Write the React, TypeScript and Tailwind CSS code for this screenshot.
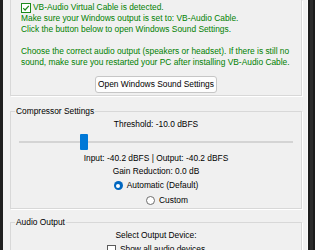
import React from "react";

const font = { fontFamily: '"Liberation Sans", Arial, sans-serif' };

function GreenCheck() {
  return (
    <svg width="10" height="10" viewBox="0 0 10 10" className="shrink-0">
      <rect x="0.5" y="0.5" width="9" height="9" fill="#fff" stroke="#1a8a1a" />
      <path d="M2.2 5.1 L4.1 7 L7.8 2.8" fill="none" stroke="#1a8a1a" strokeWidth="1.2" />
    </svg>
  );
}

function Radio({ checked, label }: { checked?: boolean; label: string }) {
  return (
    <div className="flex h-[15px] items-center justify-center gap-[4px]">
      {checked ? (
        <span className="flex h-[9px] w-[9px] items-center justify-center rounded-full bg-[#0067c0]">
          <span className="h-[4px] w-[4px] rounded-full bg-white" />
        </span>
      ) : (
        <span className="h-[9px] w-[9px] rounded-full border border-[#6e6e6e] bg-white" />
      )}
      <span>{label}</span>
    </div>
  );
}

export default function App() {
  return (
    <div className="flex h-[250px] w-[315px] overflow-hidden bg-[#f0f0f0] text-[8.4px] text-black" style={font}>
      <div className="w-[3px] shrink-0 bg-[#1e1e1e]" />
      <div className="flex min-w-0 flex-1 flex-col pl-[7px] pr-[5px]">
        {/* VB-Audio group (top edge scrolled away) */}
        <div className="border-x border-b border-[#d8d8d8] px-[10px] pb-[2px] pt-[2px] leading-[11px] text-[#008000] shadow-[1px_1px_0_#fff]">
          <div className="flex items-center gap-[2px]">
            <GreenCheck />
            <span>VB-Audio Virtual Cable is detected.</span>
          </div>
          <div>Make sure your Windows output is set to: VB-Audio Cable.</div>
          <div>Click the button below to open Windows Sound Settings.</div>
          <div className="h-[11px]" />
          <div>Choose the correct audio output (speakers or headset). If there is still no</div>
          <div>sound, make sure you restarted your PC after installing VB-Audio Cable.</div>
          <div className="mt-[8px] flex justify-center">
            <button className="h-[17px] w-[122px] rounded-[3px] border border-[#c6c6c6] bg-[#fdfdfd] text-black">
              Open Windows Sound Settings
            </button>
          </div>
        </div>

        {/* Compressor */}
        <fieldset className="mt-[10px] border border-[#d8d8d8] text-center leading-[13px] shadow-[1px_1px_0_#fff]">
          <legend className="ml-[4px] px-[1px] text-left leading-[11px]">Compressor Settings</legend>
          <div className="mt-[1px]">Threshold: -10.0 dBFS</div>
          <div className="mt-[3px] px-[8px]">
            <div className="relative flex h-[16px] items-center">
              <div className="h-[2px] w-full bg-[#d4d4d4]" />
              <div className="absolute left-[61px] top-0 h-[16px] w-[8px] rounded-[1px] bg-[#0078d7]" />
            </div>
          </div>
          <div className="mt-[2px]">Input: -40.2 dBFS | Output: -40.2 dBFS</div>
          <div>Gain Reduction: 0.0 dB</div>
          <Radio checked label="Automatic (Default)" />
          <div className="pl-[22px]">
            <Radio label="Custom" />
          </div>
        </fieldset>

        {/* Audio Output */}
        <fieldset className="mt-[8px] border border-[#d8d8d8] text-center leading-[13px] shadow-[1px_1px_0_#fff]">
          <legend className="ml-[4px] px-[1px] text-left leading-[11px]">Audio Output</legend>
          <div className="mt-[1px]">Select Output Device:</div>
          <div className="flex h-[15px] items-center justify-center gap-[4px]">
            <span className="h-[9px] w-[9px] border border-[#5a5a5a] bg-white" />
            <span>Show all audio devices</span>
          </div>
          <div className="h-[20px]" />
        </fieldset>
      </div>
      <div className="w-px shrink-0 bg-[#fafafa]" />
      <div className="flex w-[7px] shrink-0 justify-center bg-[#1c1c1c]">
        <div className="w-[3px] bg-[#2c2c2c]" />
      </div>
    </div>
  );
}
